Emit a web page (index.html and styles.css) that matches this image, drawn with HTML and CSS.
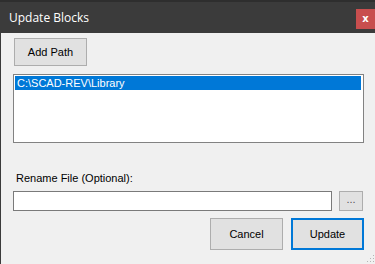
FILE: index.html
```html
<!DOCTYPE html>
<html lang="en">
<head>
  <meta charset="UTF-8" />
  <title>Update Blocks</title>
  <link rel="stylesheet" href="styles.css">
</head>
<body>

  <div class="window">
    <div class="titlebar">
      <span class="title">Update Blocks</span>
      <button class="close">x</button>
    </div>

    <div class="content">
      <button class="btn add-path">Add Path</button>

      <div class="listbox">
        <div class="list-item selected">C:\SCAD-REV\Library</div>
      </div>

      <label class="rename-label" for="renameFile">Rename File (Optional):</label>
      <div class="rename-row">
        <input type="text" id="renameFile" class="textbox">
        <button class="btn browse">...</button>
      </div>

      <div class="actions">
        <button class="btn">Cancel</button>
        <button class="btn primary">Update</button>
      </div>
    </div>

    <div class="grip"></div>
  </div>

</body>
</html>
```

FILE: styles.css
```css
:root {
  --title-bg: #3b3b3b;
  --body-bg: #f0f0f0;
  --btn-bg: #e1e1e1;
  --btn-border: #adadad;
  --accent: #0078d7;
  --field-border: #7a7a7a;
}

* {
  box-sizing: border-box;
}

body {
  margin: 0;
  padding: 0;
  font-family: 'Liberation Sans', Arial, sans-serif;
  font-size: 11px;
  color: #000;
  background: var(--body-bg);
}

.window {
  position: relative;
  width: 375px;
  height: 264px;
  background: var(--body-bg);
  border-left: 1px solid var(--title-bg);
  display: flex;
  flex-direction: column;
}

.titlebar {
  height: 33px;
  background: var(--title-bg);
  border-top: 2px solid #2e2e2e;
  display: flex;
  align-items: flex-start;
  justify-content: space-between;
  margin-left: -1px;
}

.title {
  color: #fff;
  font-family: 'Open Sans', 'Noto Sans', sans-serif;
  font-size: 12px;
  padding: 7px 0 0 9px;
}

.close {
  width: 19px;
  height: 20px;
  margin-top: 7px;
  border: none;
  background: #c84e4e;
  color: #fff;
  font-family: 'DejaVu Sans', sans-serif;
  font-weight: bold;
  font-size: 10px;
  padding: 0 0 2px;
}

.content {
  padding: 5px 11px 0 12px;
  display: flex;
  flex-direction: column;
}

.btn {
  background: var(--btn-bg);
  border: 1px solid var(--btn-border);
  font-family: 'Liberation Sans', Arial, sans-serif;
  font-size: 11px;
  color: #000;
  width: 73px;
  height: 32px;
  padding: 0;
}

.add-path {
  height: 28px;
  margin-left: 1px;
  align-self: flex-start;
}

.listbox {
  margin-top: 8px;
  width: 351px;
  height: 69px;
  background: #fff;
  border: 1px solid #828282;
  padding: 1px 2px 0 1px;
}

.list-item {
  height: 14px;
  line-height: 14px;
  padding-left: 2px;
}

.list-item.selected {
  background: var(--accent);
  color: #fff;
}

.rename-label {
  margin: 28px 0 0 3px;
  height: 14px;
  line-height: 14px;
}

.rename-row {
  margin-top: 5px;
  display: flex;
  gap: 7px;
  align-items: center;
}

.textbox {
  width: 319px;
  height: 20px;
  border: 1px solid var(--field-border);
  background: #fff;
  margin: 1px 0 0;
}

.browse {
  width: 24px;
  height: 20px;
  color: #555;
  padding-bottom: 4px;
}

.actions {
  margin-top: 7px;
  width: 351px;
  display: flex;
  justify-content: flex-end;
  gap: 8px;
}

.primary {
  border: 2px solid var(--accent);
}

.grip {
  position: absolute;
  right: 1px;
  bottom: 2px;
  width: 8px;
  height: 8px;
  background:
    radial-gradient(circle, #b5b5b5 0.8px, transparent 1px) 0 0 / 3px 3px;
  clip-path: polygon(100% 0, 100% 100%, 0 100%);
}
```
